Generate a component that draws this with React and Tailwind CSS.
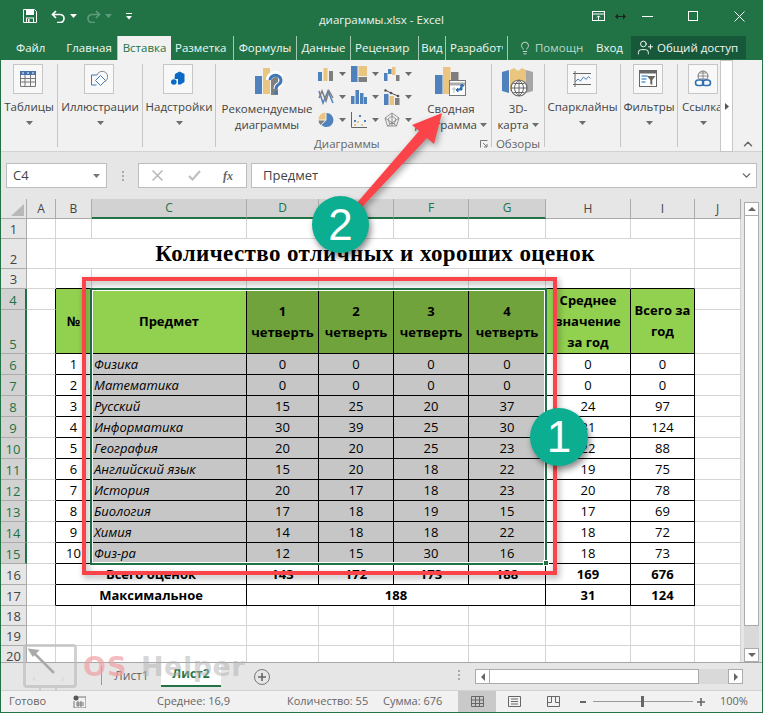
import React from 'react';
import { Lightbulb, UserPlus, ChevronDown, ChevronUp } from 'lucide-react';

const UI = 'font-["Open_Sans","Noto_Sans",sans-serif]';

const Caret = ({ className = '', color = '#6d6d6d' }) => (
  <svg width="7" height="4" viewBox="0 0 7 4" className={`shrink-0 ${className}`}><path d="M0 0h7L3.5 4z" fill={color} /></svg>
);

const Ico = ({ size = 16, w, h, vb, children, className = '' }) => (
  <svg width={w || size} height={h || size} viewBox={vb || `0 0 ${size} ${size}`} className={`shrink-0 ${className}`}>{children}</svg>
);

const BLUE = '#4f81bd';
const YEL = '#eac57f';
const GRY = '#7f7f7f';

// ---- ribbon icons ----
const TablesIcon = () => (
  <Ico size={18}>
    <rect x="1" y="1" width="16" height="4" fill="#4472a8" />
    <path d="M3 3h2M8 3h2M13 3h2" stroke="#fff" strokeWidth="1" />
    <path d="M1.500 5v11.500h15V5M1 8.500h16M1 12h16M6 5v12M11.500 5v12" fill="none" stroke="#777" strokeWidth="1" />
  </Ico>
);
const ShapesIcon = () => (
  <Ico size={18}>
    <path d="M7 5H1.500v10h5" fill="none" stroke="#3f78b5" strokeWidth="1" />
    <path d="M7 5a5.500 5.500 0 1 1 8 6.500" fill="none" stroke="#888" strokeWidth="1" />
    <path d="M10.500 5.500l5 5-5 5-5-5z" fill="#fff" stroke="#3f78b5" strokeWidth="1" />
  </Ico>
);
const AddinIcon = () => (
  <Ico size={16}>
    <path d="M5 3l4.500-2.500L14.500 3v8l-4 2.500H8V8H4.500z" fill="#0b6bc4" />
    <circle cx="3.800" cy="11" r="2.800" fill="#0b6bc4" />
  </Ico>
);
const SparkIcon = () => (
  <Ico size={20}>
    <path d="M3 2v16M1 4.500h18M1 15.500h18" stroke="#666" strokeWidth="1" fill="none" />
    <path d="M3 13l3-3 2.500 2 3-4 2.500 2.500 2.500-3 2 2" stroke="#4f81bd" strokeWidth="1" fill="none" />
  </Ico>
);
const FilterIcon = () => (
  <Ico size={18}>
    <rect x="0.500" y="0.500" width="17" height="16" fill="#fff" stroke="#666" />
    <rect x="0" y="0" width="18" height="3.500" fill="#666" />
    <path d="M2.500 6h6M2.500 9h5M2.500 12h4" stroke="#5b9bd5" strokeWidth="1.500" />
    <path d="M8 6h8.500l-3.200 4v5l-2 -1v-4z" fill="#666" />
  </Ico>
);
const LinkIcon = () => (
  <Ico size={18}>
    <circle cx="9" cy="6" r="5" fill="none" stroke="#777" />
    <path d="M4 6h10M9 1v10M5.500 3h7M5.500 9h7" stroke="#777" strokeWidth="0.800" fill="none" />
    <rect x="1.500" y="10" width="8" height="5.500" rx="2.700" fill="#fff" stroke="#2f6fb0" strokeWidth="1.600" />
    <rect x="8.500" y="10" width="8" height="5.500" rx="2.700" fill="none" stroke="#2f6fb0" strokeWidth="1.600" />
  </Ico>
);
const RecommendIcon = () => (
  <Ico w={28} h={30} vb="0 0 28 30">
    <rect x="0" y="9" width="7" height="18" fill={BLUE} />
    <rect x="8" y="1" width="7" height="26" fill={YEL} />
    <rect x="16" y="6" width="7" height="22" fill={GRY} />
    <path d="M14 13a6.500 6 0 1 1 10 5c-2 1-2.500 2-2.500 4" fill="none" stroke="#fff" strokeWidth="6" />
    <path d="M15 13a5.500 5 0 1 1 8.500 4.500c-1.800 1.200-2.500 2-2.500 4.500" fill="none" stroke="#3f78b5" strokeWidth="3" />
    <rect x="19.500" y="24" width="3" height="3" fill="#3f78b5" />
  </Ico>
);
const PivotIcon = () => (
  <Ico w={32} h={32} vb="0 0 32 32">
    <rect x="0" y="9" width="7.500" height="19" fill={BLUE} />
    <rect x="8" y="1" width="7.500" height="27" fill={YEL} />
    <rect x="16" y="6" width="7.500" height="8" fill={GRY} />
    <rect x="14.500" y="14.500" width="16" height="15" fill="#fff" stroke="#777" />
    <path d="M15 18h15" stroke="#aaa" strokeWidth="3" />
    <path d="M18 22h2v2h-2zM18 26h2" stroke="#bbb" fill="none" />
    <path d="M27 19v5h-4M21 24l2-2v4zM27 18l-2 2h4z" fill="#2f6fb0" stroke="#2f6fb0" strokeWidth="1" />
  </Ico>
);
const MapIcon = () => (
  <Ico w={32} h={32} vb="0 0 32 32">
    <path d="M0 5l7-2v23l-7-2z" fill={BLUE} />
    <path d="M8 3l4-2 4 3v20H8z" fill={YEL} />
    <path d="M16 4l4-3 4 2v22h-8z" fill={YEL} />
    <path d="M24 3l7 2v19l-7 2z" fill="#a6a6a6" />
    <circle cx="17" cy="21" r="8" fill="#fff" stroke="#666" strokeWidth="1.200" />
    <path d="M9 21h16M17 13v16M11.500 16.500h11M11.500 25.500h11M17 13c-6 5-6 11 0 16M17 13c6 5 6 11 0 16" fill="none" stroke="#666" />
  </Ico>
);

// ---- small chart gallery icons ----
const Mini = ({ children }) => <Ico size={16}>{children}</Ico>;
const Bars = () => (
  <Mini>
    <rect x="0" y="6" width="4" height="9" fill={BLUE} /><rect x="5.500" y="2" width="4" height="13" fill={YEL} /><rect x="11" y="5" width="4" height="10" fill={GRY} />
  </Mini>
);
const Tree = () => (
  <Mini>
    <rect x="0" y="0" width="6.500" height="16" fill={BLUE} /><rect x="7.500" y="0" width="8.500" height="10" fill={YEL} /><rect x="7.500" y="11" width="8.500" height="5" fill={GRY} />
  </Mini>
);
const Water = () => (
  <Mini>
    <rect x="0" y="7" width="3.500" height="8" fill={BLUE} /><rect x="4" y="3" width="3.500" height="5" fill={BLUE} /><rect x="8" y="1" width="3.500" height="8" fill={YEL} /><rect x="12" y="9" width="3.500" height="6" fill={GRY} />
  </Mini>
);
const Lines = () => (
  <Mini>
    <path d="M1 2l4 12 5-12 5 12" stroke={BLUE} strokeWidth="1.500" fill="none" />
    <path d="M1 9l3-7 4 10 3-10 4 7" stroke={GRY} strokeWidth="1.500" fill="none" />
  </Mini>
);
const Hist = () => (
  <Mini>
    <rect x="0" y="7" width="3.500" height="8" fill={BLUE} /><rect x="4.500" y="1" width="3.500" height="14" fill={BLUE} /><rect x="9" y="4" width="3.500" height="11" fill={BLUE} /><rect x="13" y="8" width="3" height="7" fill={BLUE} />
  </Mini>
);
const Combo = () => (
  <Mini>
    <rect x="0" y="5" width="4.500" height="11" fill={BLUE} /><rect x="5.500" y="7" width="4.500" height="9" fill={YEL} /><rect x="11" y="9" width="4.500" height="7" fill={GRY} />
    <path d="M1 1l6 3 7 3" stroke="#555" strokeWidth="1" fill="none" /><circle cx="1.500" cy="1.500" r="1.300" fill="#555" /><circle cx="7" cy="4" r="1.300" fill="#555" /><circle cx="14" cy="7" r="1.300" fill="#555" />
  </Mini>
);
const Pie = () => (
  <Mini>
    <path d="M8.500 1a7 7 0 1 1-5 12l5-5z" fill={BLUE} />
    <path d="M7.500 7.500H0.500A7 7 0 0 1 7.500 .5z" fill={YEL} />
    <path d="M.5 8.500h6.500l-4.500 4.500A7 7 0 0 1 .5 8.500z" fill={GRY} />
  </Mini>
);
const Scatter = () => (
  <Mini>
    <path d="M.5 0v15.500H16" stroke="#666" fill="none" />
    <rect x="3" y="8" width="2" height="2" fill={BLUE} /><rect x="8" y="3" width="2" height="2" fill={BLUE} /><rect x="13" y="8" width="2" height="2" fill={BLUE} />
    <rect x="6" y="9" width="2" height="2" fill={YEL} /><rect x="10" y="12" width="2" height="2" fill={YEL} /><rect x="3" y="12" width="2" height="2" fill={YEL} />
  </Mini>
);
const Radar = () => (
  <Mini>
    <path d="M8 1l7 5-2.500 8h-9L1 6zM8 1v13M1 6l12 8M15 6L3.500 14M8 4l4 3-1.500 4.500h-5L4 7z" stroke="#888" strokeWidth="0.900" fill="none" />
  </Mini>
);

const GroupSep = 'border-r border-[#c6c6c6]';

const BoxButton = ({ label, children }) => (
  <div className="flex flex-col items-center w-full">
    <div className="mr-[2px] w-[30px] h-[30px] border border-[#c6c6c6] bg-[#f8f8f8] flex items-center justify-center">{children}</div>
    <div className="mt-[5px] h-[16px] leading-[16px] whitespace-nowrap">{label}</div>
    <Caret className="mt-[6px]" />
  </div>
);

const Group = ({ className, children }) => (
  <div className={`h-[83px] shrink-0 flex flex-col ${GroupSep} ${className}`}>{children}</div>
);

const gallery = [
  [Bars, Tree, Water],
  [Lines, Hist, Combo],
  [Pie, Scatter, Radar],
];

const Ribbon = () => (
  <div className="h-[92px] bg-[#f1f1f1] border-b border-[#d2d2d2] pt-[4px] flex items-start text-[11.5px] text-[#444]">
    <Group className="w-[57px]"><BoxButton label="Таблицы"><TablesIcon /></BoxButton></Group>
    <Group className="w-[85px]"><BoxButton label="Иллюстрации"><ShapesIcon /></BoxButton></Group>
    <Group className="w-[73px]"><BoxButton label="Надстройки"><AddinIcon /></BoxButton></Group>
    <Group className="w-[276px]">
      <div className="flex h-[68px]">
        <div className="w-[102px] flex flex-col items-center">
          <div className="h-[30px] pt-[3px] pl-[4px]"><RecommendIcon /></div>
          <div className="mt-[7px] leading-[16px] text-center">Рекомендуемые<br />диаграммы</div>
        </div>
        <div className="w-[99px] pt-[2px] grid grid-cols-3 auto-rows-[23px]">
          {gallery.flat().map((Icon, i) => (
            <div key={i} className="flex items-start gap-[5px]">
              <Icon />
              <Caret className="mt-[6px]" />
            </div>
          ))}
        </div>
        <div className="w-[68px] flex flex-col items-center">
          <div className="h-[30px] pt-[2px]"><PivotIcon /></div>
          <div className="mt-[7px] leading-[16px] text-center">Сводная<br /><span className="inline-flex items-center gap-[3px]">диаграмма<Caret /></span></div>
        </div>
      </div>
      <div className="flex items-center pl-[98px] pr-[3px] mt-auto -mb-[4px] h-[14px] leading-[14px] text-[#666]">
        Диаграммы
        <svg width="8" height="8" viewBox="0 0 8 8" className="ml-auto"><path d="M.5 7.500V.5h7" fill="none" stroke="#777" /><path d="M3 3l4 4M4 7h3V4" fill="none" stroke="#777" /></svg>
      </div>
    </Group>
    <Group className="w-[53px]">
      <div className="h-[34px] pt-[3px] flex justify-center"><MapIcon /></div>
      <div className="mt-[3px] leading-[16px] text-center">3D-<br /><span className="inline-flex items-center gap-[3px]">карта<Caret /></span></div>
      <div className="mt-auto -mb-[4px] h-[14px] leading-[14px] text-center text-[#666]">Обзоры</div>
    </Group>
    <Group className="w-[76px]"><BoxButton label="Спарклайны"><SparkIcon /></BoxButton></Group>
    <Group className="w-[57px]"><BoxButton label="Фильтры"><FilterIcon /></BoxButton></Group>
    <div className="h-[83px] w-[42px] shrink-0 overflow-hidden flex flex-col">
      <div className="ml-[10px] w-[30px] h-[30px] border border-[#c6c6c6] bg-[#f8f8f8] flex items-center justify-center"><LinkIcon /></div>
      <div className="mt-[5px] pl-[4px] h-[16px] leading-[16px] whitespace-nowrap">Ссылка</div>
      <Caret className="mt-[6px] ml-[22px]" />
    </div>
    <div className="-mt-[4px] w-[13px] h-[92px] shrink-0 bg-white border border-[#c6c6c6] flex items-center justify-center">
      <svg width="4" height="7" viewBox="0 0 4 7"><path d="M0 0l4 3.500L0 7z" fill="#555" /></svg>
    </div>
    <div className="flex-1 h-[87px] flex items-end justify-center"><ChevronUp size={14} strokeWidth={2.500} color="#666" /></div>
  </div>
);

// ---- title + tabs ----
const TitleBar = () => (
  <div className="h-[36px] pb-[4px] flex items-center text-white relative">
    <svg width="14" height="14" viewBox="0 0 14 14" className="ml-[22px]">
      <path d="M.5.5h11l2 2v11H.5z" fill="none" stroke="#fff" />
      <rect x="3" y="1" width="8" height="5" fill="#fff" />
      <rect x="3.500" y="9" width="7" height="4.500" fill="none" stroke="#fff" />
      <rect x="5" y="10" width="1.500" height="3" fill="#fff" />
    </svg>
    <svg width="15" height="13" viewBox="0 0 15 13" className="ml-[14px]">
      <path d="M5 1L1.500 4.500 5 8M2 4.500h7a4 4 0 0 1 0 8H6" fill="none" stroke="#fff" strokeWidth="1.700" />
    </svg>
    <Caret color="#fff" className="ml-[4px]" />
    <svg width="15" height="13" viewBox="0 0 15 13" className="ml-[9px]">
      <path d="M10 1l3.500 3.500L10 8M13 4.500H6a4 4 0 0 0 0 8h3" fill="none" stroke="#5c9c7d" strokeWidth="1.700" />
    </svg>
    <Caret color="#5c9c7d" className="ml-[4px]" />
    <svg width="6" height="7" viewBox="0 0 6 7" className="ml-[14px]"><path d="M0 .5h6" stroke="#fff" /><path d="M0 3h6L3 6.500z" fill="#fff" /></svg>
    <div className="absolute left-[318px] top-[11px] text-[11.5px] leading-[18px] text-[#eef4f0] whitespace-nowrap">диаграммы.xlsx - Excel</div>
    <div className="ml-auto flex items-center pr-[17px]">
      <svg width="14" height="10" viewBox="0 0 14 10"><rect x=".5" y=".5" width="12" height="9" fill="none" stroke="#fff" /><path d="M.5 3h12" stroke="#fff" /><path d="M6.500 9V5M4.800 6.500l1.700-1.700 1.700 1.700" stroke="#fff" fill="none" /></svg>
      <svg width="11" height="7" viewBox="0 0 11 7" className="ml-[9px]"><path d="M0 3.500l3-3v6zM11 3.500l-3-3v6zM3 3h5v1H3z" fill="#222" /></svg>
      <div className="ml-[16px] w-[11px] h-[1px] bg-white" />
      <div className="ml-[35px] w-[10px] h-[10px] border border-white" />
      <svg width="11" height="11" viewBox="0 0 11 11" className="ml-[36px]"><path d="M.5.5l10 10M10.500.5l-10 10" stroke="#fff" /></svg>
    </div>
  </div>
);

const tabs = [
  ['Файл', 'w-[60px] pl-[15px]'],
  ['Главная', 'w-[57px] justify-center border-r border-[#a8c8b6]'],
  ['Вставка', 'w-[53px] justify-center bg-[#f1f1f1] !text-[#217346]'],
  ['Разметка страницы', 'w-[63px] pl-[4px] pr-[4px] border-r border-[#a8c8b6]'],
  ['Формулы', 'w-[63px] justify-center border-r border-[#a8c8b6]'],
  ['Данные', 'w-[54px] justify-center border-r border-[#a8c8b6]'],
  ['Рецензирование', 'w-[68px] pl-[4px] pr-[8px] border-r border-[#a8c8b6]'],
  ['Вид', 'w-[27px] justify-center border-r border-[#a8c8b6]'],
  ['Разработчик', 'w-[62px] pl-[4px] pr-[4px] border-r border-[#a8c8b6]'],
];

const TabStrip = () => (
  <div className="h-[24px] flex text-[11.5px] text-[#f2f7f4]">
    {tabs.map(([label, cls]) => (
      <div key={label} className={`h-[24px] flex items-center overflow-hidden whitespace-nowrap shrink-0 ${cls}`}>
        <span className="overflow-hidden">{label}</span>
      </div>
    ))}
    <div className="w-[84px] flex items-center pl-[10px] gap-[3px] overflow-hidden whitespace-nowrap">
      <Lightbulb size={14} strokeWidth={1.300} className="shrink-0" />
      <span className="w-[48px] overflow-hidden text-[#bcd8c9]">Помощник</span>
    </div>
    <div className="w-[39px] flex items-center pl-[4px]">Вход</div>
    <div className="w-[115px] h-[23px] bg-[#17583a] flex items-center pl-[6px] gap-[3px] whitespace-nowrap">
      <UserPlus size={17} strokeWidth={1.400} className="shrink-0" />
      Общий доступ
    </div>
  </div>
);

const FormulaBar = () => (
  <div className="h-[47px] bg-[#e6e6e6] pt-[11px] pl-[5px] pr-[5px] flex items-start text-[13px] text-[#444]">
    <div className="w-[101px] h-[25px] border border-[#bdbdbd] bg-white flex items-center pl-[6px] pr-[4px]">
      C4
      <svg width="7" height="4" viewBox="0 0 7 4" className="ml-auto mr-[2px]"><path d="M0 0h7L3.500 4z" fill="#777" /></svg>
    </div>
    <div className="w-[31px] h-[25px] flex flex-col items-center justify-center gap-[2px]">
      <i className="block w-[2px] h-[2px] bg-[#aaa]" /><i className="block w-[2px] h-[2px] bg-[#aaa]" /><i className="block w-[2px] h-[2px] bg-[#aaa]" />
    </div>
    <div className="w-[109px] h-[25px] border border-[#bdbdbd] bg-white flex items-center">
      <svg width="11" height="11" viewBox="0 0 11 11" className="ml-[13px]"><path d="M.5.5l10 10M10.500.5l-10 10" stroke="#b7b7b7" strokeWidth="1.500" /></svg>
      <svg width="13" height="11" viewBox="0 0 13 11" className="ml-[25px]"><path d="M1 6l3.500 3.500L12 1" stroke="#c0c0c0" strokeWidth="2.200" fill="none" /></svg>
      <span className='ml-[22px] text-[12px] italic font-["Liberation_Serif",serif] font-bold text-[#666]'>fx</span>
    </div>
    <div className="ml-[4px] flex-1 h-[25px] border border-[#bdbdbd] bg-white flex items-center pl-[11px] pr-[3px]">
      Предмет
      <ChevronDown size={13} strokeWidth={2.500} color="#666" className="ml-auto" />
    </div>
  </div>
);

// ---- sheet ----
const heights = { 1: 'h-[20px]', 2: 'h-[30px]', 3: 'h-[20px]', 4: 'h-[21px]', 5: 'h-[44px]', 18: 'h-[20px]', 19: 'h-[20px]', 20: 'h-[20px]' };
const rowH = n => heights[n] || 'h-[21px]';

const RowHead = ({ n }) => {
  const sel = n >= 4 && n <= 15;
  return (
    <td className={sel
      ? 'p-0 bg-[#d2d2d2] text-[#217346] border-b border-[#ababab] border-r-2 border-r-[#217346] text-center align-bottom leading-[17px]'
      : 'p-0 bg-[#e6e6e6] text-[#444] border-b border-[#ababab] border-r border-r-[#ababab] text-center align-bottom leading-[17px]'}>{n}</td>
  );
};

const G = 'p-0 border-r border-b border-[#d4d4d4]';
const K = 'p-0 border-r border-b border-black';
const AK = 'p-0 border-b border-b-[#d4d4d4] border-r border-r-black';
const TB = 'p-0 border-r border-r-[#d4d4d4] border-b border-b-black';
const HG = 'bg-[#92d050]';
const HD = 'bg-[#70a33c]';

const data = [
  ['Физика', 0, 0, 0, 0, 0, 0],
  ['Математика', 0, 0, 0, 0, 0, 0],
  ['Русский', 15, 25, 20, 37, 24, 97],
  ['Информатика', 30, 39, 25, 30, 31, 124],
  ['География', 20, 20, 25, 23, 22, 88],
  ['Английский язык', 15, 20, 18, 22, 19, 75],
  ['История', 20, 17, 18, 23, 20, 78],
  ['Биология', 17, 18, 19, 15, 17, 69],
  ['Химия', 14, 18, 18, 22, 18, 72],
  ['Физ-ра', 12, 15, 30, 16, 18, 73],
];

const Quarter = ({ n }) => (
  <td rowSpan={2} className={`${K} ${HD} text-center font-bold leading-[21px] pt-[2px]`}>{n}<br />четверть</td>
);

const Sheet = () => (
  <table className="table-fixed border-separate border-spacing-0 w-[740px] text-[13px] text-black leading-none">
    <colgroup>
      <col className="w-[26px]" /><col className="w-[29px]" /><col className="w-[36px]" /><col className="w-[155px]" />
      <col className="w-[72px]" /><col className="w-[75px]" /><col className="w-[75px]" /><col className="w-[77px]" />
      <col className="w-[85px]" /><col className="w-[64px]" /><col className="w-[46px]" />
    </colgroup>
    <thead>
      <tr className="h-[20px] text-[12px]">
        <th className="p-0 font-normal bg-[#e6e6e6] border-r border-b border-[#ababab] align-bottom">
          <svg width="13" height="12" viewBox="0 0 13 12" className="ml-[10px] mb-[2px]"><path d="M13 0v12H0z" fill="#b8b8b8" /></svg>
        </th>
        {['A', 'B'].map(c => <th key={c} className="p-0 font-normal text-[#444] bg-[#e6e6e6] border-r border-b border-[#ababab]">{c}</th>)}
        {['C', 'D', 'E', 'F', 'G'].map(c => <th key={c} className="p-0 font-normal text-[#217346] bg-[#d2d2d2] border-r border-r-[#ababab] border-b-2 border-b-[#217346]">{c}</th>)}
        {['H', 'I', 'J'].map(c => <th key={c} className="p-0 font-normal text-[#444] bg-[#e6e6e6] border-r border-b border-[#ababab]">{c}</th>)}
      </tr>
    </thead>
    <tbody>
      <tr className={rowH(1)}><RowHead n={1} />{Array.from({ length: 10 }, (_, i) => <td key={i} className={G} />)}</tr>
      <tr className={rowH(2)}>
        <RowHead n={2} /><td className={G} />
        <td colSpan={8} className={`${G} text-center font-bold text-[23px] tracking-[0.4px] font-["Liberation_Serif",serif] pb-[1px]`}>Количество отличных и хороших оценок</td>
        <td className={G} />
      </tr>
      <tr className={rowH(3)}>
        <RowHead n={3} /><td className={G} />
        {Array.from({ length: 8 }, (_, i) => <td key={i} className={TB} />)}
        <td className={G} />
      </tr>
      <tr className={rowH(4)}>
        <RowHead n={4} /><td className={AK} />
        <td rowSpan={2} className={`${K} ${HG} text-center font-bold`}>№</td>
        <td rowSpan={2} className={`${K} ${HG} text-center font-bold`}>Предмет</td>
        <Quarter n={1} /><Quarter n={2} /><Quarter n={3} /><Quarter n={4} />
        <td rowSpan={2} className={`${K} ${HG} text-center font-bold leading-[21px]`}>Среднее<br />значение<br />за год</td>
        <td rowSpan={2} className={`${K} ${HG} text-center font-bold leading-[21px]`}>Всего за<br />год</td>
        <td className={G} />
      </tr>
      <tr className={rowH(5)}><RowHead n={5} /><td className={AK} /><td className={G} /></tr>
      {data.map((d, i) => (
        <tr key={d[0]} className={rowH(6 + i)}>
          <RowHead n={6 + i} /><td className={AK} />
          <td className={`${K} text-center pt-[1px]`}>{i + 1}</td>
          <td className={`${K} bg-[#c6c6c6] italic pl-[2px] pt-[1px]`}>{d[0]}</td>
          {d.slice(1, 5).map((v, j) => <td key={j} className={`${K} bg-[#c6c6c6] text-center pt-[1px]`}>{v}</td>)}
          <td className={`${K} text-center pt-[1px]`}>{d[5]}</td>
          <td className={`${K} text-center pt-[1px]`}>{d[6]}</td>
          <td className={G} />
        </tr>
      ))}
      <tr className={rowH(16)}>
        <RowHead n={16} /><td className={AK} />
        <td colSpan={2} className={`${K} text-center font-bold pt-[1px]`}>Всего оценок</td>
        {[143, 172, 173, 188, 169, 676].map((v, i) => <td key={i} className={`${K} text-center font-bold pt-[1px]`}>{v}</td>)}
        <td className={G} />
      </tr>
      <tr className={rowH(17)}>
        <RowHead n={17} /><td className={AK} />
        <td colSpan={2} className={`${K} text-center font-bold pt-[1px]`}>Максимальное</td>
        <td colSpan={4} className={`${K} text-center font-bold pt-[1px]`}>188</td>
        <td className={`${K} text-center font-bold pt-[1px]`}>31</td>
        <td className={`${K} text-center font-bold pt-[1px]`}>124</td>
        <td className={G} />
      </tr>
      {[18, 19, 20].map(n => (
        <tr key={n} className={rowH(n)}><RowHead n={n} />{Array.from({ length: 10 }, (_, i) => <td key={i} className={G} />)}</tr>
      ))}
    </tbody>
  </table>
);

const ScrollBtn = ({ className, children }) => (
  <div className={`bg-white border border-[#ababab] flex items-center justify-center ${className}`}>{children}</div>
);

const VScroll = () => (
  <div className="w-[21px] shrink-0 h-[463px] bg-[#e6e6e6] pt-[3px] pl-[3px] pr-[3px] flex flex-col">
    <ScrollBtn className="h-[14px]"><svg width="8" height="4" viewBox="0 0 8 4"><path d="M4 0l4 4H0z" fill="#666" /></svg></ScrollBtn>
    <div className="h-[410px] bg-white border border-[#ababab] border-t-0" />
    <div className="flex-1 bg-[#d9d9d9]" />
    <ScrollBtn className="h-[14px]"><svg width="8" height="4" viewBox="0 0 8 4"><path d="M0 0h8L4 4z" fill="#666" /></svg></ScrollBtn>
  </div>
);

const SheetTabs = () => (
  <div className="h-[28px] bg-[#e6e6e6] border-t border-[#a6a6a6] flex items-start text-[12px] relative">
    <div className="ml-[100px] w-[60px] h-[19px] mt-[3px] border-l border-[#999] flex items-center justify-center text-[#666]">Лист1</div>
    <div className="w-[60px] h-[24px] bg-white border-b-2 border-[#217346] flex items-center justify-center font-bold text-[#217346]">Лист2</div>
    <div className="ml-[33px] mt-[6px] w-[16px] h-[16px] rounded-full border border-[#777] flex items-center justify-center">
      <svg width="10" height="10" viewBox="0 0 10 10"><path d="M5 1v8M1 5h8" stroke="#666" strokeWidth="1.600" /></svg>
    </div>
    <div className="ml-[188px] mt-[7px] w-[2px] flex flex-col gap-[2px]">
      <i className="block h-[2px] bg-[#aaa]" /><i className="block h-[2px] bg-[#aaa]" /><i className="block h-[2px] bg-[#aaa]" />
    </div>
    <div className="ml-[15px] mt-[6px] w-[268px] h-[15px] flex">
      <ScrollBtn className="w-[15px]"><svg width="4" height="8" viewBox="0 0 4 8"><path d="M4 0v8L0 4z" fill="#666" /></svg></ScrollBtn>
      <div className="w-[209px] bg-white border-y border-r border-[#ababab]" />
      <div className="flex-1 bg-[#d9d9d9]" />
      <ScrollBtn className="w-[15px]"><svg width="4" height="8" viewBox="0 0 4 8"><path d="M0 0l4 4-4 4z" fill="#666" /></svg></ScrollBtn>
    </div>
  </div>
);

const StatusBar = () => (
  <div className="h-[22px] bg-[#f1f1f1] border-t border-[#d2d2d2] flex items-center text-[11px] text-[#666] whitespace-nowrap">
    <span className="ml-[8px] w-[64px]">Готово</span>
    <svg width="13" height="13" viewBox="0 0 13 13">
      <circle cx="3" cy="3" r="2.500" fill="#555" /><path d="M5 2h8v11H1V6" fill="none" stroke="#777" /><path d="M3 8h8M3 10h8M5 6v6M8 6v6" stroke="#777" />
    </svg>
    <span className="ml-[71px] w-[130px]">Среднее: 16,9</span>
    <span className="w-[96px]">Количество: 55</span>
    <span className="w-[75px]">Сумма: 676</span>
    <div className="w-[38px] h-[21px] bg-[#c9c9c9] flex items-center justify-center">
      <svg width="13" height="11" viewBox="0 0 13 11"><path d="M.5.5h12v10H.5zM.5 4h12M.5 7.500h12M4.500.5v10M8.500.5v10" fill="none" stroke="#666" /></svg>
    </div>
    <svg width="13" height="11" viewBox="0 0 13 11" className="ml-[12px]"><path d="M.5.5h12v10H.5z" fill="none" stroke="#666" /><path d="M3 3h7M3 5.500h7M3 8h7" stroke="#666" /></svg>
    <svg width="13" height="11" viewBox="0 0 13 11" className="ml-[26px]"><path d="M.5.5h12v10H.5zM.5 6.500h4v-6M8.500.5v6h4" fill="none" stroke="#666" /></svg>
    <div className="ml-[20px] w-[6px] h-[2px] bg-[#666]" />
    <div className="ml-[7px] w-[100px] h-[1px] bg-[#999] relative">
      <div className="absolute left-[48px] -top-[5px] w-[3px] h-[11px] bg-[#666]" />
    </div>
    <svg width="8" height="8" viewBox="0 0 8 8" className="ml-[4px]"><path d="M4 0v8M0 4h8" stroke="#666" strokeWidth="1.600" /></svg>
    <span className="ml-[15px]">100%</span>
  </div>
);

const Overlays = () => (
  <>
    {/* range selection */}
    <div className="absolute left-[90px] top-[288px] w-[457px] h-[277px] border-2 border-[#217346] pointer-events-none">
      <div className="w-full h-full border border-white" />
    </div>
    <div className="absolute left-[543px] top-[560px] w-[6px] h-[6px] bg-[#217346] border border-white" />

    {/* red frame */}
    <div className="absolute left-[82px] top-[277px] w-[475px] h-[298px] border-[4px] border-[#fb4449] drop-shadow-[2px_3px_3px_rgba(0,0,0,0.35)]" />

    {/* arrow */}
    <svg width="763" height="713" viewBox="0 0 763 713" className="absolute left-0 top-0 drop-shadow-[2px_3px_3px_rgba(0,0,0,0.35)]">
      <polygon points="343,219 419,131 412,125 442,113 434,144 427,138 347,223" fill="#fb4449" />
    </svg>

    {/* numbered badges */}
    <div className='absolute left-[312px] top-[196px] w-[57px] h-[57px] rounded-full bg-[#0bae91] shadow-[2px_4px_6px_rgba(0,0,0,0.45)] flex items-center justify-center text-white text-[44px] font-["Liberation_Sans",sans-serif]'>2</div>
    <div className='absolute left-[530px] top-[408px] w-[58px] h-[58px] rounded-full bg-[#0bae91] shadow-[2px_4px_6px_rgba(0,0,0,0.45)] flex items-center justify-center text-white text-[44px] font-["Liberation_Sans",sans-serif]'>1</div>

    {/* watermark */}
    <div className="absolute left-[23px] top-[644px] w-[54px] h-[44px] rounded-[4px] border-[3px] border-[#bdbdbd]/70">
      <svg width="48" height="38" viewBox="0 0 48 38" className="absolute left-0 top-0">
        <path d="M4 3l7 1-4 4zM8 6l20 20" stroke="#aaa" strokeWidth="2.500" fill="#aaa" />
        <path d="M9 29l-3 3 3 3zM36 29l3 3-3 3z" fill="#ddd" />
      </svg>
    </div>
    <div className="absolute left-[39px] top-[688px] w-[18px] h-[3px] border-x-2 border-[#bdbdbd]/70" />
    <div className='absolute left-[83px] top-[652px] text-[27px] leading-[30px] font-bold font-["DejaVu_Sans",sans-serif] tracking-[1px] text-[#f19ea2]/70'>OS</div>
    <div className='absolute left-[141px] top-[652px] text-[27px] leading-[30px] font-bold font-["DejaVu_Sans",sans-serif] tracking-[0.500px] text-[#b0b0b0]/50'>Helper</div>
  </>
);

export default function App() {
  return (
    <div className={`${UI} relative w-[763px] h-[713px] overflow-hidden bg-[#217346]`}>
      <div className="absolute inset-[0px] flex flex-col pl-[1px] pr-[1px] pb-[1px]">
        <TitleBar />
        <TabStrip />
        <Ribbon />
        <FormulaBar />
        <div className="flex h-[463px] overflow-hidden bg-white">
          <div className="w-[740px] shrink-0 overflow-hidden"><Sheet /></div>
          <VScroll />
        </div>
        <SheetTabs />
        <StatusBar />
      </div>
      <Overlays />
    </div>
  );
}
